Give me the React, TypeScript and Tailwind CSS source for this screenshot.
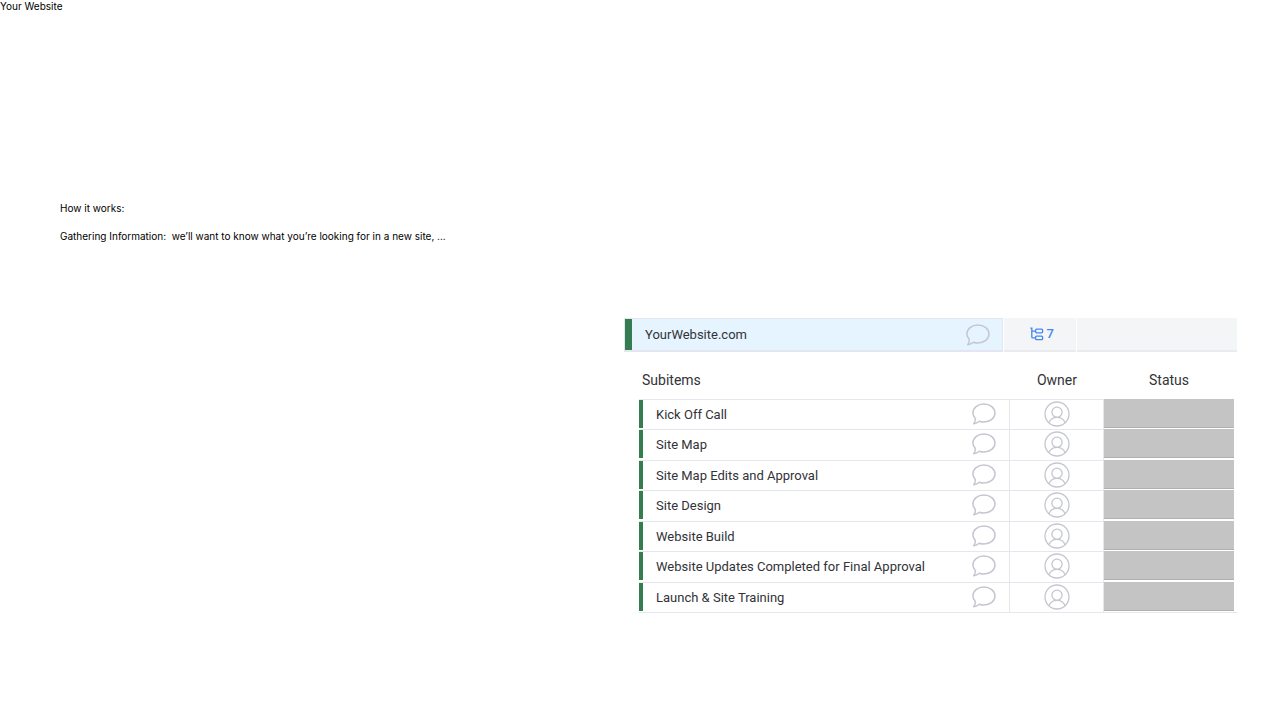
const subitems: string[] = [
  "Kick Off Call",
  "Site Map",
  "Site Map Edits and Approval",
  "Site Design",
  "Website Build",
  "Website Updates Completed for Final Approval",
  "Launch & Site Training",
];

function CommentButton({ item }: { item: string }) {
  return (
    <button type="button" aria-label={`Comment on ${item}`} className="shrink-0">
      <svg className="block h-6 w-6" viewBox="0 0 24 24" fill="none" stroke="#c5c7d0" strokeWidth="1.5" strokeLinejoin="round">
        <path d="M3.2 16.2C1.7 14.7.9 12.9.9 11 .9 6 5.7 2 11.9 2S23 6 23 11s-4.9 9-11.1 9c-1.7 0-3.2-.3-4.6-.8-1.6 1.5-3.2 2.2-5.6 2.5 1.5-1.6 1.9-3.5 1.5-5.5Z" />
      </svg>
    </button>
  );
}

function PersonButton({ item }: { item: string }) {
  return (
    <button type="button" aria-label={`Assign ${item}`} className="block">
      <svg className="block h-[26px] w-[26px]" viewBox="0 0 26 26" fill="none" stroke="#c5c7d0" strokeWidth="1.3">
        <circle cx="13" cy="13" r="12" />
        <circle cx="13" cy="11.2" r="5.1" />
        <path d="M4.9 21.7c1.3-3.2 4.2-5.3 8.1-5.3s6.8 2.1 8.1 5.3" />
      </svg>
    </button>
  );
}

function TreeIcon() {
  return (
    <svg className="h-[14px] w-[14px]" viewBox="0 0 14 14" fill="none" stroke="#4387f0" strokeWidth="1.3">
      <path d="M.3 1.1h2.2M1.8 1.1v8.8c0 .7.3 1 1 1h2.7M1.8 4.1h3.7" />
      <rect x="5.6" y="2.2" width="7" height="3.6" rx="1" />
      <rect x="5.6" y="9.1" width="7" height="3.6" rx="1" />
    </svg>
  );
}

export default function App() {
  return (
    <div className="bg-white font-[Roboto,sans-serif] text-[#323338]">
      <header className="h-[200px] font-[Inter,sans-serif] text-[10px] leading-3 text-black">
        <h1>Your Website</h1>
      </header>
      <main className="grid grid-cols-[564fr_613fr] pr-[43px] pl-[60px]">
        <section className="flex flex-col gap-4 pt-[2px] font-[Inter,sans-serif] text-[10px] leading-3 text-black">
          <h2>How it works:</h2>
          <p className="whitespace-pre-wrap">{"Gathering Information:  we’ll want to know what you’re looking for in a new site, ..."}</p>
        </section>
        <section className="pt-[118px] text-[13px]">
          <div className="grid h-[34px] grid-cols-[380fr_72fr_160fr] gap-px">
            <div className="flex items-center border border-b-2 border-[#e3e6ee] bg-[#e6f4ff] pr-3">
              <span className="mr-[13px] h-full w-[7px] bg-[#357d50]" />
              <span className="flex-1">YourWebsite.com</span>
              <CommentButton item="YourWebsite.com" />
            </div>
            <div className="flex items-center justify-center gap-[3px] border-b-2 border-[#eaebef] bg-[#f4f5f7] pl-[3px] text-[13px] font-medium text-[#4387f0]">
              <TreeIcon />
              <span>7</span>
            </div>
            <div className="border-b-2 border-[#eaebef] bg-[#f4f5f7]" />
          </div>
          <div className="pt-[9px] pl-[15px]">
            <table className="w-full table-fixed border-separate border-spacing-0">
              <colgroup>
                <col />
                <col className="w-[94px]" />
                <col className="w-[133px]" />
              </colgroup>
              <thead>
                <tr className="h-[38px] text-[14px]">
                  <th scope="col" className="pl-[3px] text-left font-normal">Subitems</th>
                  <th scope="col" className="text-center font-normal">Owner</th>
                  <th scope="col" className="pr-[3px] text-center font-normal">Status</th>
                </tr>
              </thead>
              <tbody className="align-top">
                {subitems.map((item) => (
                  <tr key={item} className="h-[30px] even:h-[31px]">
                    <td className="border-t border-r border-[#e6e7ee] p-0">
                      <div className="flex h-[28px] items-center border-l-4 border-[#357d50] pr-[13px] pl-[13px]">
                        <span className="flex-1 pt-[2px] leading-5">{item}</span>
                        <CommentButton item={item} />
                      </div>
                    </td>
                    <td className="border-t border-r border-[#e6e7ee] p-0">
                      <div className="flex h-[28px] items-center justify-center">
                        <PersonButton item={item} />
                      </div>
                    </td>
                    <td className="p-0 pr-[3px]">
                      <div className="h-[29px] border-b border-[#b0b0b0] bg-[#c4c4c4]" />
                    </td>
                  </tr>
                ))}
              </tbody>
              <tfoot>
                <tr>
                  <td colSpan={3} className="h-px border-t border-[#e6e7ee] p-0" />
                </tr>
              </tfoot>
            </table>
          </div>
        </section>
      </main>
    </div>
  );
}
